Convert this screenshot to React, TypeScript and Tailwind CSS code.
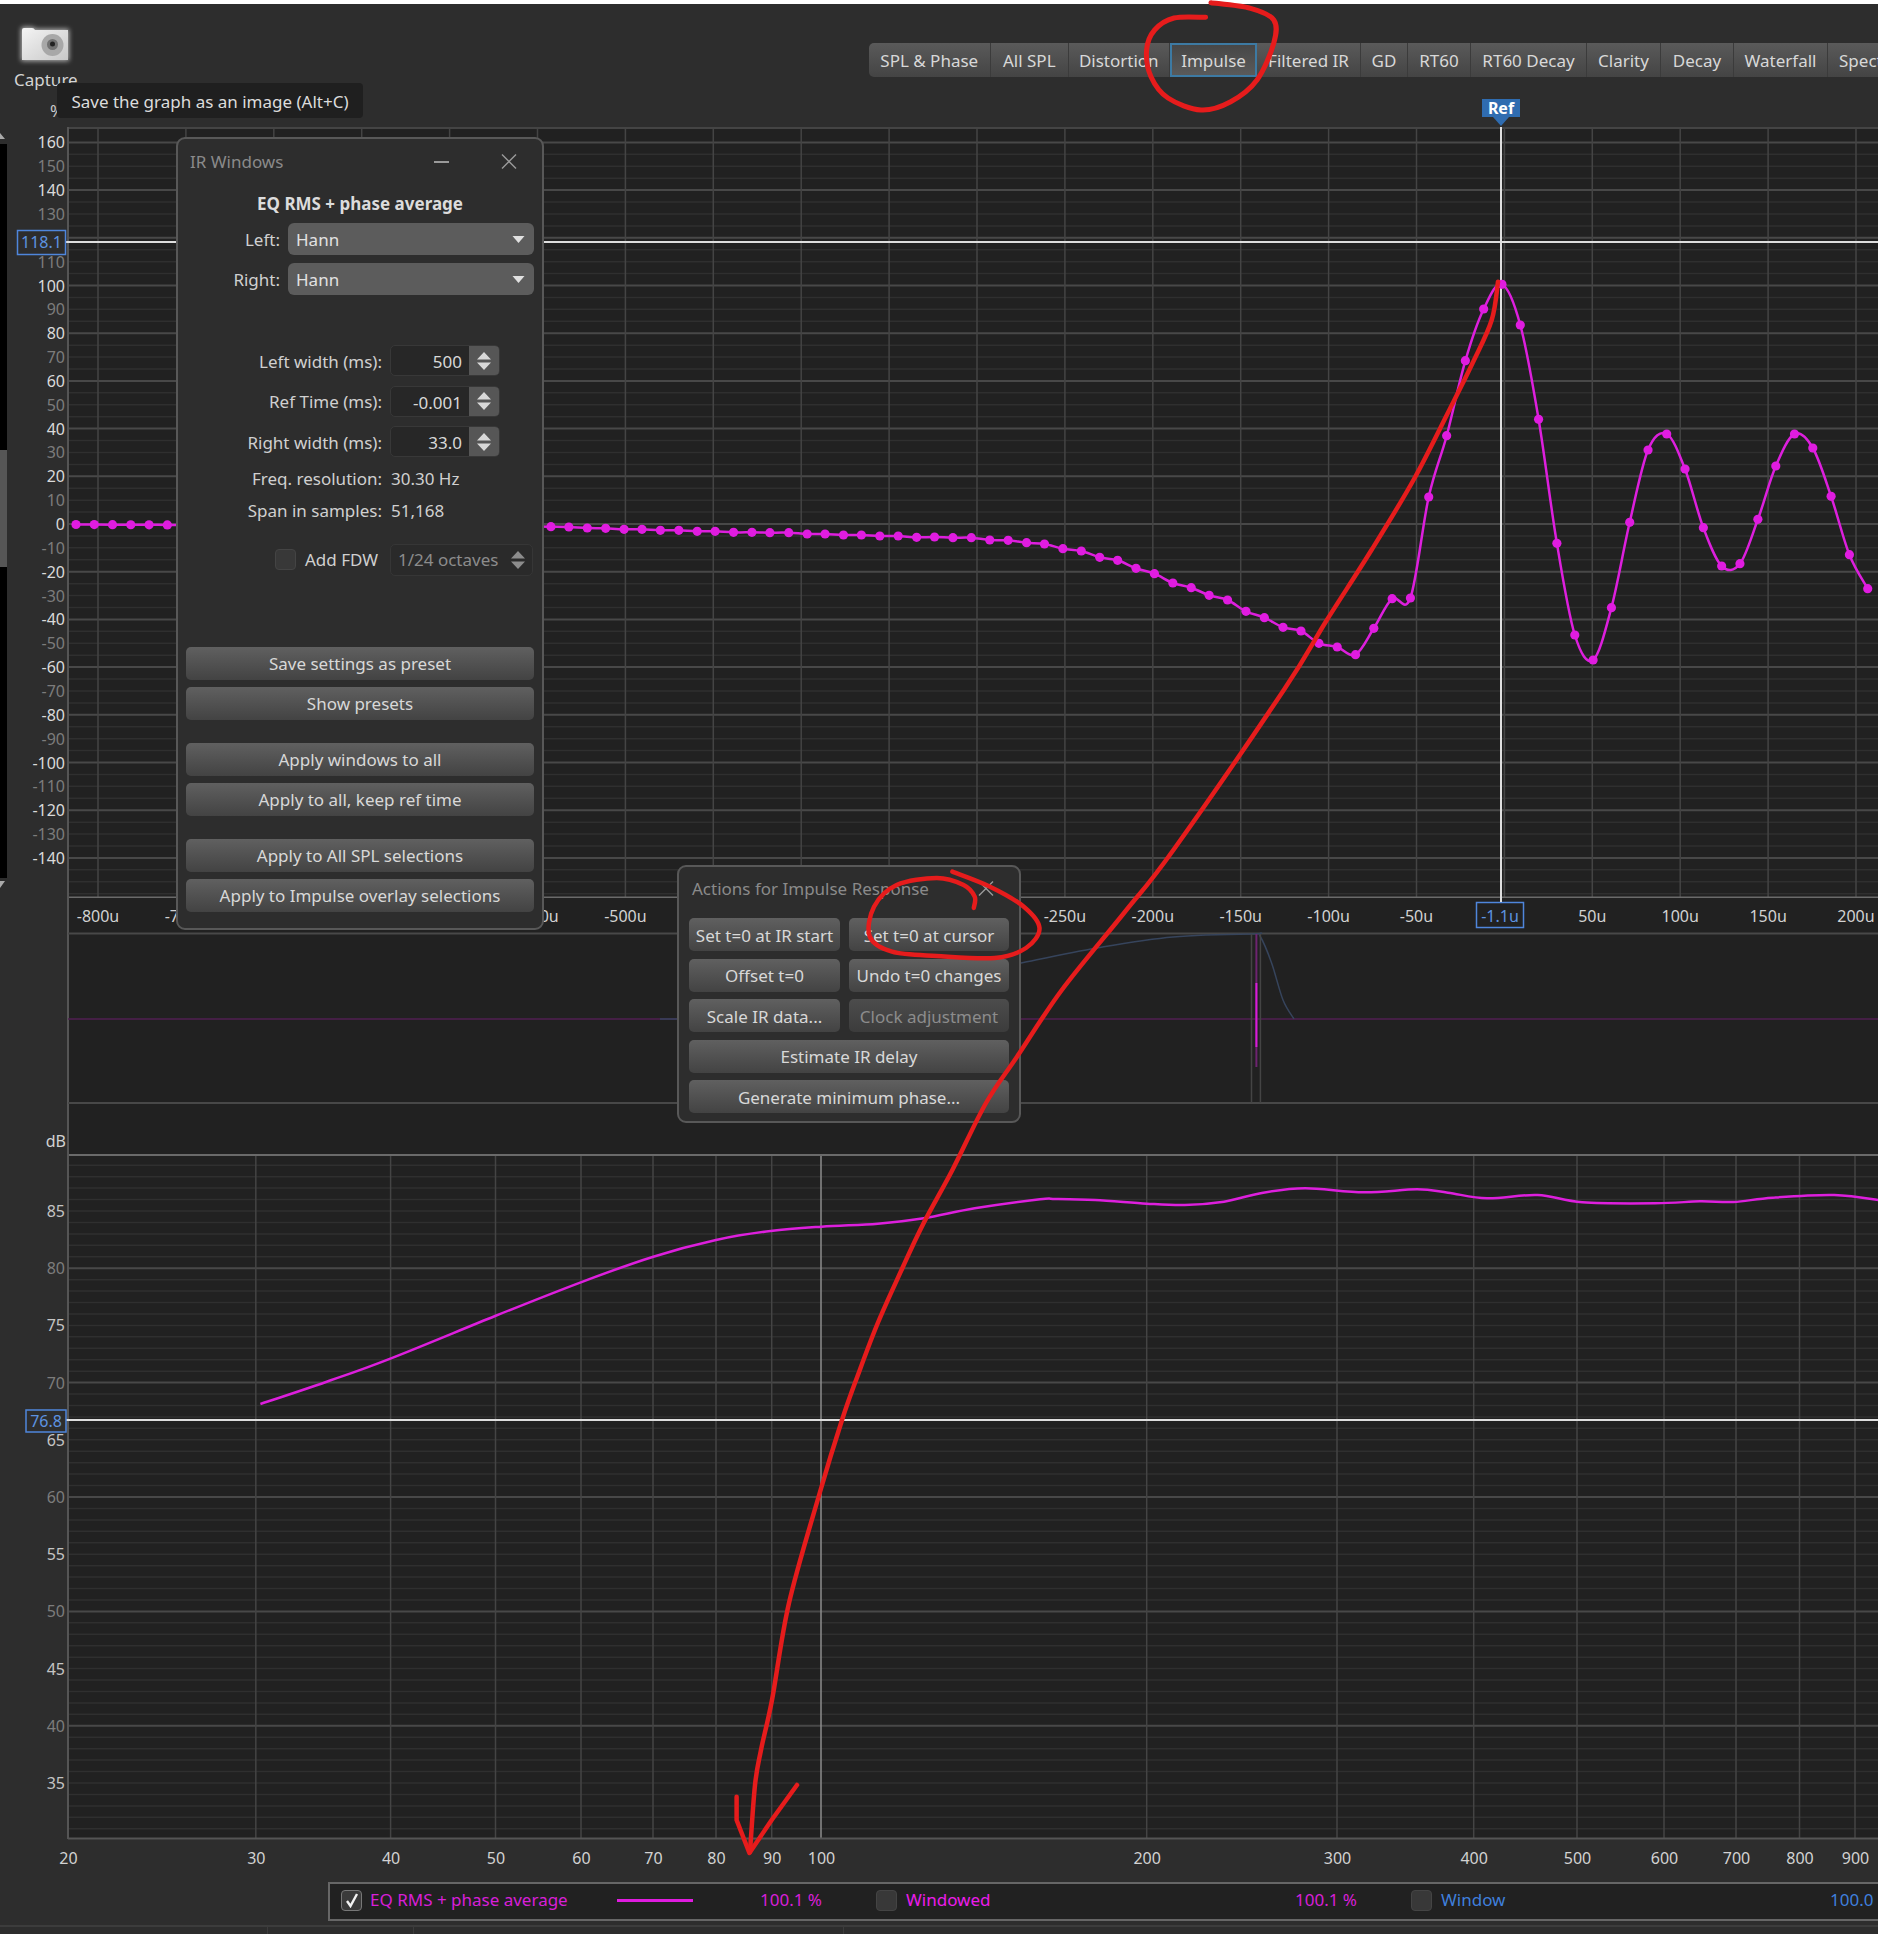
import type { ReactNode } from "react";

type Pt = number[];

// catmull-rom through the measured points
function smooth(pts: Pt[]) {
  let d = `M${pts[0][0]} ${pts[0][1]}`;
  for (let i = 0; i < pts.length - 1; i++) {
    const p0 = pts[i - 1] || pts[i];
    const p1 = pts[i];
    const p2 = pts[i + 1];
    const p3 = pts[i + 2] || p2;
    const c1x = p1[0] + (p2[0] - p0[0]) / 6;
    const c1y = p1[1] + (p2[1] - p0[1]) / 6;
    const c2x = p2[0] - (p3[0] - p1[0]) / 6;
    const c2y = p2[1] - (p3[1] - p1[1]) / 6;
    d += ` C${c1x.toFixed(1)} ${c1y.toFixed(1)} ${c2x.toFixed(1)} ${c2y.toFixed(1)} ${p2[0].toFixed(1)} ${p2[1].toFixed(1)}`;
  }
  return d;
}

const range = (n: number) => Array.from({ length: n }, (_, i) => i);

const flatPart: Pt[] = range(26).map((n) => [551 - 18.27 * (26 - n), 524.5 + n * 0.08]);

const tailPart: Pt[] = [
  [22, 80], [58, 81], [95, 84], [132, 85], [169, 88], [205, 88], [242, 91], [279, 91], [316, 94], [352, 94],
  [389, 97], [426, 97], [462, 98], [500, 98], [537, 102], [573, 102], [610, 105], [646, 105], [683, 108], [720, 108],
  [757, 112], [793, 111], [830, 113], [867, 113], [904, 120], [941, 121], [978, 128], [1014, 132], [1051, 146], [1088, 153],
  [1125, 172], [1161, 181], [1198, 205], [1235, 221], [1272, 249], [1309, 263], [1345, 286], [1382, 300], [1419, 334], [1456, 353],
].map(([x, y]) => [540 + x / 2.01, 500 + y / 3]);

const peakPart: Pt[] = [
  [8, 1102], [55, 1113], [102, 1150], [150, 1161], [198, 1184], [246, 1105], [294, 1016], [342, 1014], [390, 711],
  [437, 527], [486, 302], [534, 147], [582, 73], [630, 195], [678, 478], [726, 850], [773, 1125], [821, 1200],
  [869, 1043], [917, 787], [965, 570], [1014, 522], [1062, 627], [1110, 803], [1158, 918], [1206, 911], [1253, 778],
  [1300, 618], [1349, 522], [1397, 564], [1445, 709], [1493, 884], [1541, 986],
].map(([x, y]) => [1280 + x / 2.622, 260 + y / 3]);

const impulse: Pt[] = [...flatPart, ...tailPart, ...peakPart];

const splCurve: Pt[] = [
  ...[[40, 672], [170, 605], [296, 535], [500, 408], [668, 307], [810, 230], [933, 180], [1040, 153], [1140, 140], [1250, 131], [1340, 115], [1440, 85], [1568, 58]]
    .map(([x, y]) => [240 + x / 1.96, 1180 + y / 3]),
  ...[[100, 87], [170, 90], [262, 101], [330, 105], [400, 95], [470, 68], [545, 55], [650, 67], [745, 58], [800, 68], [870, 85], [960, 75], [1040, 97], [1170, 100], [1250, 94], [1310, 96], [1380, 83], [1490, 75], [1578, 92]]
    .map(([x, y]) => [1000 + x / 1.786, 1170 + y / 3]),
];

const windowCurve: Pt[] = [[1015, 964.5], [1021, 963], [1097, 948], [1173, 937], [1254, 934], [1260, 936], [1271.6, 963], [1283, 1000], [1294, 1019]];

const freqTicks: [number, string][] = [
  [68, "20"], [255.8, "30"], [390.6, "40"], [495.5, "50"], [581, "60"], [653, "70"], [716, "80"], [771.7, "90"], [821, "100"],
  [1146.7, "200"], [1337, "300"], [1473.7, "400"], [1577, "500"], [1664, "600"], [1736, "700"], [1799.5, "800"], [1855, "900"],
];

const tabs = [
  { label: "SPL & Phase", w: "w-[122.5px]" },
  { label: "All SPL", w: "w-[77.5px]" },
  { label: "Distortion", w: "w-[101.5px]" },
  { label: "Impulse", w: "w-[87px]", active: true },
  { label: "Filtered IR", w: "w-[104px]" },
  { label: "GD", w: "w-[47px]" },
  { label: "RT60", w: "w-[63px]" },
  { label: "RT60 Decay", w: "w-[116px]" },
  { label: "Clarity", w: "w-[74px]" },
  { label: "Decay", w: "w-[73px]" },
  { label: "Waterfall", w: "w-[94px]" },
  { label: "Spectrogram", w: "w-[110px]" },
];

function Btn({ children, className = "", disabled = false }: { children: ReactNode; className?: string; disabled?: boolean }) {
  return (
    <div
      className={`flex h-[33px] items-center justify-center whitespace-nowrap rounded-[5px] bg-gradient-to-b pt-[2px] ${
        disabled ? "from-[#4c4c4c] to-[#3c3c3c] text-[#8c8c8c]" : "from-[#606060] to-[#434343] text-[#d8d8d8]"
      } ${className}`}
    >
      {children}
    </div>
  );
}

function CloseIcon({ className = "" }: { className?: string }) {
  return (
    <svg viewBox="0 0 16 16" className={`h-[17px] w-[16px] ${className}`}>
      <path d="M1 1 L15 15 M15 1 L1 15" stroke="#9a9a9a" strokeWidth="1.4" fill="none" />
    </svg>
  );
}

function UpDown({ color = "#d8d8d8" }: { color?: string }) {
  return (
    <svg viewBox="0 0 14 18" className="h-[18px] w-[14px]">
      <path d="M7 0 L14 7.5 H0 Z M0 10.5 H14 L7 18 Z" fill={color} />
    </svg>
  );
}

function Combo({ value }: { value: string }) {
  return (
    <div className="flex h-[32px] w-[246px] items-center justify-between rounded-[6px] bg-[#5c5c5c] pl-[8px] pr-[9px] text-[#e2e2e2]">
      <span className="pt-[2px]">{value}</span>
      <svg viewBox="0 0 12 7" className="h-[7px] w-[13px]">
        <path d="M0 0 H12 L6 7 Z" fill="#e0e0e0" />
      </svg>
    </div>
  );
}

function Spin({ label, value }: { label: string; value: string }) {
  return (
    <div className="flex h-[31px] items-center">
      <div className="w-[204px] pt-[2px] text-right text-[#d0d0d0]">{label}</div>
      <div className="ml-[8px] flex h-full w-[110px] overflow-hidden rounded-[5px] border border-[#383838] bg-[#272727]">
        <div className="flex-1 pr-[7px] text-right leading-[31px] text-[#d8d8d8]">{value}</div>
        <div className="flex w-[30px] items-center justify-center bg-[#565656]">
          <UpDown />
        </div>
      </div>
    </div>
  );
}

function CheckBox({ checked = false, className = "" }: { checked?: boolean; className?: string }) {
  return (
    <div className={`flex h-[21px] w-[21px] shrink-0 items-center justify-center rounded-[4px] border ${checked ? "border-[#777] bg-[#3a3a3a]" : "border-[#444] bg-[#383838]"} ${className}`}>
      {checked && (
        <svg viewBox="0 0 14 16" className="h-[16px] w-[14px]">
          <path d="M2 9 L5.5 14 L12 2" stroke="#f2f2f2" strokeWidth="2.4" fill="none" />
        </svg>
      )}
    </div>
  );
}

function IrWindows() {
  return (
    <div className="absolute left-[176px] top-[137px] flex h-[793px] w-[368px] flex-col rounded-[9px] border-2 border-[#585858] bg-[#2d2d2d]">
      <div className="flex h-[46px] items-center px-[12px] text-[#8a8a8a]">
        IR Windows
        <div className="ml-auto mr-[81px] h-[1.5px] w-[15px] bg-[#9a9a9a]" />
      </div>
      <CloseIcon className="absolute left-[323px] top-[14px]" />
      <div className="flex h-[38px] items-center justify-center font-bold text-[#dcdcdc]">EQ RMS + phase average</div>
      <div className="flex flex-col gap-[8px]">
        <div className="flex items-center">
          <div className="w-[102px] pt-[2px] text-right text-[#d0d0d0]">Left:</div>
          <div className="ml-[8px]"><Combo value="Hann" /></div>
        </div>
        <div className="flex items-center">
          <div className="w-[102px] pt-[2px] text-right text-[#d0d0d0]">Right:</div>
          <div className="ml-[8px]"><Combo value="Hann" /></div>
        </div>
      </div>
      <div className="mt-[50px] flex flex-col gap-[9.5px]">
        <Spin label="Left width (ms):" value="500" />
        <Spin label="Ref Time (ms):" value="-0.001" />
        <Spin label="Right width (ms):" value="33.0" />
      </div>
      <div className="mt-[4.5px] flex h-[32px] items-center pt-[2px] text-[#d0d0d0]">
        <div className="w-[204px] text-right">Freq. resolution:</div>
        <div className="ml-[9px]">30.30 Hz</div>
      </div>
      <div className="flex h-[32px] items-center pt-[2px] text-[#d0d0d0]">
        <div className="w-[204px] text-right">Span in samples:</div>
        <div className="ml-[9px]">51,168</div>
      </div>
      <div className="mt-[18px] flex h-[32px] items-center">
        <CheckBox className="ml-[97px]" />
        <div className="ml-[9px] w-[78px] whitespace-nowrap text-[#d0d0d0]">Add FDW</div>
        <div className="ml-[7px] flex h-full w-[143px] items-center justify-between whitespace-nowrap rounded-[5px] border border-[#363636] bg-[#2a2a2a] pl-[7px] pr-[7px] text-[#8c8c8c]">
          1/24 octaves
          <UpDown color="#8c8c8c" />
        </div>
      </div>
      <div className="ml-[8px] mt-[71px] flex w-[348px] flex-col">
        <Btn>Save settings as preset</Btn>
        <Btn className="mt-[7px]">Show presets</Btn>
        <Btn className="mt-[23px]">Apply windows to all</Btn>
        <Btn className="mt-[7px]">Apply to all, keep ref time</Btn>
        <Btn className="mt-[23px]">Apply to All SPL selections</Btn>
        <Btn className="mt-[7px]">Apply to Impulse overlay selections</Btn>
      </div>
    </div>
  );
}

function ActionsWindow() {
  return (
    <div className="absolute left-[677px] top-[865px] flex h-[258px] w-[344px] flex-col rounded-[9px] border-2 border-[#585858] bg-[#2d2d2d]">
      <div className="flex h-[44px] items-center pl-[13px] text-[#8a8a8a]">Actions for Impulse Response</div>
      <CloseIcon className="absolute left-[299px] top-[13px]" />
      <div className="ml-[10px] mt-[7px] grid grid-cols-[151px_160px] gap-x-[9px] gap-y-[7.5px]">
        <Btn>Set t=0 at IR start</Btn>
        <Btn>Set t=0 at cursor</Btn>
        <Btn>Offset t=0</Btn>
        <Btn>Undo t=0 changes</Btn>
        <Btn>Scale IR data...</Btn>
        <Btn disabled>Clock adjustment</Btn>
        <Btn className="col-span-2">Estimate IR delay</Btn>
        <Btn className="col-span-2">Generate minimum phase...</Btn>
      </div>
    </div>
  );
}

function Toolbar() {
  return (
    <div className="relative flex h-[123px] shrink-0">
      <div className="w-[868.5px] shrink-0 pl-[14px] pt-[18px]">
        <svg viewBox="0 0 58 44" className="ml-[2px] h-[44px] w-[58px]">
          <defs>
            <filter id="glow" x="-20%" y="-20%" width="140%" height="140%">
              <feGaussianBlur stdDeviation="2.4" />
            </filter>
            <linearGradient id="cam" x1="0" y1="0" x2="1" y2="1">
              <stop offset="0" stopColor="#f4f4f4" />
              <stop offset="1" stopColor="#c8c8c8" />
            </linearGradient>
          </defs>
          <path d="M5 11 V7 Q5 5 7 5 H16 Q18 5 19 7 H53 V39 H5 Z" fill="#ffffff" opacity="0.65" filter="url(#glow)" />
          <path d="M6 11 V8 Q6 6 8 6 H16 Q18 6 19 8 H52 V38 H6 Z" fill="url(#cam)" />
          <circle cx="36.5" cy="23" r="11" fill="#a8a8a8" />
          <circle cx="36.5" cy="22.5" r="5.5" fill="#727272" />
          <circle cx="36.5" cy="22" r="2.5" fill="#222" />
        </svg>
        <div className="mt-[1px] text-[#d4d4d4]">Capture</div>
      </div>
      <div className="absolute left-[50px] top-[94px] text-[#c8c8c8]">%</div>
      <div className="mt-[39px] flex h-[34px] flex-1 overflow-hidden rounded-l-[5px] bg-gradient-to-b from-[#5a5a5a] to-[#444]">
        {tabs.map((t) => (
          <div
            key={t.label}
            className={`flex shrink-0 items-center whitespace-nowrap pt-[1px] text-[#d8d8d8] ${t.w} ${
              t.active
                ? "justify-center border-2 border-[#3d7aa3] bg-gradient-to-b from-[#474747] to-[#5a5a5a]"
                : t.label === "Spectrogram"
                  ? "pl-[11px]"
                  : "justify-center border-r border-[#3b3b3b]"
            }`}
          >
            {t.label}
          </div>
        ))}
      </div>
    </div>
  );
}

function ImpulseChart() {
  return (
    <svg viewBox="0 127 1878 771" className="block h-[771px] w-[1878px] shrink-0">
      <rect x="68" y="127" width="1810" height="771" fill="#212121" />
      {/* scrollbar strip on the far left */}
      <rect x="0" y="144" width="7" height="734" fill="#000" />
      <rect x="0" y="450" width="7" height="117" fill="#565656" />
      <path d="M0 133 L5 139 H0 Z M0 881 H5 L0 888 Z" fill="#aaa" />
      {range(70).map((i) => {
        const y = 142.4 + i * 11.925;
        const major = i % 4 === 0;
        return <line key={i} x1="68" x2="1878" y1={y} y2={y} stroke={major ? "#484848" : "#2f2f2f"} strokeWidth={major ? 2 : 1.5} />;
      })}
      {range(21).map((n) => (
        <line key={n} x1={98 + n * 87.9} x2={98 + n * 87.9} y1="127" y2="898" stroke="#444" strokeWidth="1.5" />
      ))}
      <line x1="68" x2="1878" y1="128" y2="128" stroke="#444" strokeWidth="2" />
      <line x1="68" x2="1878" y1="897.5" y2="897.5" stroke="#6a6a6a" strokeWidth="2" />
      <line x1="68" x2="68" y1="127" y2="898" stroke="#555" strokeWidth="2" />
      {range(31).filter((i) => i !== 4).map((i) => {
        const v = 160 - i * 10;
        return (
          <text key={v} x="65" y={142.4 + i * 23.85 + 6} textAnchor="end" fontSize="16" fill={i % 2 === 0 ? "#dadada" : "#7c7c7c"}>
            {v}
          </text>
        );
      })}
      <line x1="66" x2="1878" y1="242" y2="242" stroke="#dedede" strokeWidth="2" />
      <rect x="17.5" y="230.5" width="48" height="24" fill="#2d2d2d" stroke="#4f86dc" strokeWidth="1.5" />
      <text x="41.5" y="248" textAnchor="middle" fontSize="16" fill="#5d93e0">118.1</text>
      <line x1="1501" x2="1501" y1="125" y2="898" stroke="#dedede" strokeWidth="2" />
      <path d={smooth(impulse)} fill="none" stroke="#dd1fdd" strokeWidth="2.5" />
      {impulse.map(([x, y], i) => (
        <circle key={i} cx={x} cy={y} r="4.6" fill="#e01ce0" />
      ))}
    </svg>
  );
}

function MiddlePanel() {
  return (
    <svg viewBox="0 898 1878 256" className="block h-[256px] w-[1878px] shrink-0">
      <rect x="68" y="898" width="1810" height="256" fill="#212121" />
      <line x1="68" x2="68" y1="898" y2="1154" stroke="#555" strokeWidth="2" />
      <line x1="68" x2="1878" y1="933.5" y2="933.5" stroke="#484848" strokeWidth="2" />
      <line x1="68" x2="1878" y1="1103" y2="1103" stroke="#484848" strokeWidth="2" />
      {range(21).filter((n) => n !== 16).map((n) => (
        <text key={n} x={98 + n * 87.9} y="922" textAnchor="middle" fontSize="16" fill="#d2d2d2">
          {-800 + n * 50}u
        </text>
      ))}
      <rect x="1476.5" y="902.5" width="47" height="25" fill="#212121" stroke="#4f86dc" strokeWidth="1.5" />
      <text x="1500" y="922" textAnchor="middle" fontSize="16" fill="#5d93e0">-1.1u</text>
      <line x1="1501" x2="1501" y1="898" y2="902" stroke="#dedede" strokeWidth="2" />
      <line x1="68" x2="1878" y1="1019" y2="1019" stroke="#501f52" strokeWidth="1.5" />
      <line x1="660" x2="677" y1="1019" y2="1019" stroke="#36445c" strokeWidth="1.5" />
      <path d={smooth(windowCurve)} fill="none" stroke="#36445c" strokeWidth="1.5" />
      <line x1="1251.5" x2="1251.5" y1="934" y2="1103" stroke="#444" strokeWidth="1.5" />
      <line x1="1260.4" x2="1260.4" y1="934" y2="1103" stroke="#444" strokeWidth="1.5" />
      <line x1="1256.4" x2="1256.4" y1="934" y2="1067" stroke="#6d2470" strokeWidth="2" />
      <line x1="1256.4" x2="1256.4" y1="983" y2="1047" stroke="#d81cd8" strokeWidth="2" />
      <text x="66" y="1147" textAnchor="end" fontSize="16" fill="#d2d2d2">dB</text>
    </svg>
  );
}

function SplChart() {
  return (
    <svg viewBox="0 1154 1878 728" className="block h-[728px] w-[1878px] shrink-0">
      <rect x="68" y="1154" width="1810" height="685" fill="#212121" />
      {range(60).map((i) => {
        // 1 dB per line, 85 dB sits at y=1211
        const y = 1211 + (i - 5) * 11.44;
        if (y < 1156 || y > 1838) return null;
        const major = (90 - i) % 10 === 0;
        return <line key={i} x1="68" x2="1878" y1={y} y2={y} stroke={major ? "#484848" : "#2f2f2f"} strokeWidth={major ? 2 : 1.5} />;
      })}
      {freqTicks.slice(1).map(([x, label]) => (
        <line key={label} x1={x} x2={x} y1="1154" y2="1839" stroke={label === "100" ? "#8c8c8c" : "#444"} strokeWidth="1.5" />
      ))}
      <line x1="68" x2="1878" y1="1155" y2="1155" stroke="#6a6a6a" strokeWidth="2" />
      <line x1="68" x2="1878" y1="1838.5" y2="1838.5" stroke="#555" strokeWidth="2" />
      <line x1="68" x2="68" y1="1154" y2="1839" stroke="#555" strokeWidth="2" />
      {range(11).map((i) => (
        <text key={i} x="65" y={1211 + i * 57.2 + 6} textAnchor="end" fontSize="16" fill={i % 2 === 0 ? "#c4c4c4" : "#7c7c7c"}>
          {85 - i * 5}
        </text>
      ))}
      {freqTicks.map(([x, label]) => (
        <text key={label} x={x + 0.5} y="1864" textAnchor="middle" fontSize="16" fill="#d2d2d2">{label}</text>
      ))}
      <line x1="66" x2="1878" y1="1420" y2="1420" stroke="#dedede" strokeWidth="2" />
      <rect x="26" y="1410" width="40" height="22" fill="#2d2d2d" stroke="#4f86dc" strokeWidth="1.5" />
      <text x="46" y="1427" textAnchor="middle" fontSize="16" fill="#5d93e0">76.8</text>
      <path d={smooth(splCurve)} fill="none" stroke="#dd1fdd" strokeWidth="2.5" />
    </svg>
  );
}

function Legend() {
  return (
    <div className="ml-[328px] flex h-[39px] w-[1650px] shrink-0 items-center border-2 border-[#666] bg-[#212121] pb-[3px] text-[#d81fd8]">
      <CheckBox checked className="ml-[11px]" />
      <div className="ml-[8px] w-[247px] whitespace-nowrap">EQ RMS + phase average</div>
      <div className="h-[3px] w-[76px] bg-[#e01ce0]" />
      <div className="ml-[67px] w-[116px] whitespace-nowrap">100.1 %</div>
      <CheckBox />
      <div className="ml-[9px] w-[389px] text-[#ec1cec]">Windowed</div>
      <div className="w-[116px] whitespace-nowrap">100.1 %</div>
      <CheckBox />
      <div className="ml-[9px] w-[389px] text-[#3f7fdc]">Window</div>
      <div className="whitespace-nowrap text-[#3f7fdc]">100.0 %</div>
    </div>
  );
}

function StatusBar() {
  return (
    <div className="mt-[4px] flex h-[9px] shrink-0 border-t-2 border-[#3c3c3c]">
      <div className="w-[268px] border-r border-[#3c3c3c]" />
      <div className="w-[146px] border-r border-[#3c3c3c]" />
      <div className="w-[430px] border-r border-[#3c3c3c]" />
    </div>
  );
}

function Annotations() {
  const circleTop: Pt[] = [[1205.6, 17.3], [1174, 18], [1154.6, 30], [1146.6, 50], [1151, 76.7], [1168, 98], [1201, 110], [1230.7, 101.7], [1257, 80], [1273.8, 43], [1273.8, 20], [1250.6, 8.3], [1211, 2.7]];
  const circleBtn: Pt[] = [[952.4, 871.7], [990, 886.7], [1023.8, 906.7], [1039.5, 928], [1026, 948], [994.8, 958], [936.8, 956], [892, 951.7], [869.8, 936.7], [874, 906.7], [896.6, 885], [936.8, 878], [963.6, 885], [974.7, 896.7], [973.8, 908]];
  const arrowLine: Pt[] = [[1498, 281.7], [1491.7, 320], [1472.6, 363], [1447.8, 413], [1413.5, 480], [1371.5, 550], [1325.8, 621.7], [1283.8, 690], [1173.4, 850], [1124, 913], [1061.8, 990], [1017, 1056.7], [986, 1103], [952.4, 1170], [923.7, 1223], [903, 1266.7], [877.8, 1323], [857.3, 1376.7], [842, 1420], [820, 1492], [789, 1603], [772, 1700], [761, 1750], [755, 1785], [750, 1852]];
  const arrowHead: Pt[] = [[736.6, 1796.7], [736.6, 1820], [749.4, 1853], [771.7, 1820], [797, 1785]];
  return (
    <svg viewBox="0 0 1878 1934" className="pointer-events-none absolute left-0 top-0 h-[1934px] w-[1878px]">
      <g fill="none" stroke="#e61c1c" strokeLinecap="round" strokeLinejoin="round">
        <path d={smooth(circleTop)} strokeWidth="5" />
        <path d={smooth(circleBtn)} strokeWidth="4.5" />
        <path d={smooth(arrowLine)} strokeWidth="4.5" />
        <path d={`M${arrowHead.map((p) => p.join(" ")).join(" L")}`} strokeWidth="4.5" />
      </g>
    </svg>
  );
}

export default function App() {
  return (
    <div className="relative flex h-[1934px] w-[1878px] flex-col overflow-hidden bg-[#2d2d2d] font-['Noto_Sans',sans-serif] text-[17px]">
      <div className="h-[4px] shrink-0 bg-white" />
      <Toolbar />
      <ImpulseChart />
      <MiddlePanel />
      <SplChart />
      <Legend />
      <StatusBar />

      <div className="absolute left-[57px] top-[83px] flex h-[35px] w-[306px] items-center justify-center rounded-[4px] bg-[#1f1f1f] pt-[2px] text-[#dcdcdc]">
        Save the graph as an image (Alt+C)
      </div>

      {/* ref flag sits on the cursor line */}
      <div className="absolute left-[1482px] top-[99px] flex h-[18px] w-[38px] items-center justify-center bg-[#2f6cb0] text-[16px] font-bold text-white">
        Ref
      </div>
      <div className="absolute left-[1493px] top-[117px] h-0 w-0 border-x-[8px] border-t-[9px] border-x-transparent border-t-[#2f6cb0]" />

      <IrWindows />
      <ActionsWindow />
      <Annotations />
    </div>
  );
}
